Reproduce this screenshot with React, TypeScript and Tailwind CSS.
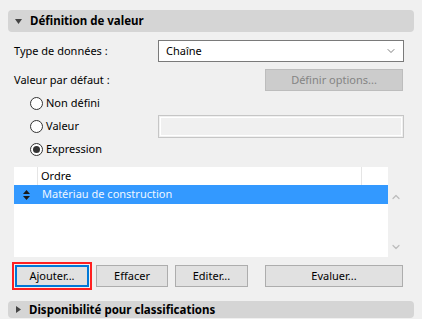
import { ChevronDown, ChevronUp } from "lucide-react";

const font = { fontFamily: '"Noto Sans", "Segoe UI", sans-serif' };

function Radio({ label, checked }: { label: string; checked?: boolean }) {
  return (
    <div className="flex items-center gap-[3px]">
      <span className="w-[13px] h-[13px] rounded-full border border-[#333] bg-white flex items-center justify-center">
        {checked && <span className="w-[7px] h-[7px] rounded-full bg-[#333]" />}
      </span>
      <span>{label}</span>
    </div>
  );
}

function Btn({ label, w, focused }: { label: string; w: string; focused?: boolean }) {
  return (
    <button
      className={
        "h-[22px] bg-[#e1e1e1] text-[11px] text-black flex items-center justify-center " +
        w +
        (focused
          ? " border-2 border-[#0078d7] outline-2 outline-[#ff2020] outline-offset-1"
          : " border border-[#adadad]")
      }
    >
      {label}
    </button>
  );
}

export default function App() {
  return (
    <div
      className="w-[422px] h-[319px] bg-[#f0f0f0] pt-[10px] px-[8px] text-[11px] text-black overflow-hidden"
      style={font}
    >
      <div className="h-[22px] rounded-[4px] bg-[#d5d5d5] flex items-center pl-[7px] gap-[8px] font-bold text-[11.5px]">
        <svg width="7" height="5" viewBox="0 0 7 5">
          <path d="M0 0H7L3.5 5Z" fill="#444" />
        </svg>
        <span>Définition de valeur</span>
      </div>

      <div className="pl-[6px] pr-[10px]">
        <div className="mt-[8px] h-[22px] flex items-center justify-between">
          <span>Type de données :</span>
          <div className="w-[246px] h-[22px] bg-white border border-[#7a7a7a] flex items-center justify-between pl-[7px] pr-[6px]">
            <span>Chaîne</span>
            <ChevronDown size={12} strokeWidth={1.5} color="#555" />
          </div>
        </div>

        <div className="mt-[7px] h-[22px] flex items-center justify-between">
          <span>Valeur par défaut :</span>
          <div className="w-[138px] h-[22px] mr-px bg-[#cccccc] border border-[#bdbdbd] text-[#848484] flex items-center justify-center">
            Définir options...
          </div>
        </div>

        <div className="pl-[16px] mt-[1px]">
          <div className="h-[23px] flex items-center">
            <Radio label="Non défini" />
          </div>
          <div className="h-[23px] flex items-center justify-between">
            <Radio label="Valeur" />
            <div className="w-[246px] h-[23px] border border-[#c6c6c6] bg-[#f0f0f0] p-px">
              <div className="w-full h-full border border-white" />
            </div>
          </div>
          <div className="h-[23px] flex items-center">
            <Radio label="Expression" checked />
          </div>
        </div>

        <div className="mt-[6px] flex">
          <div className="w-[374px] h-[90px] bg-white">
            <div className="h-[18px] flex">
              <div className="w-[24px] border-r border-[#e5e5e5]" />
              <div className="w-[324px] border-r border-[#e5e5e5] pl-[3px] flex items-center">
                Ordre
              </div>
            </div>
            <div className="h-[19px] bg-[#3399ff] text-[#eef6ff] flex items-center">
              <div className="w-[24px] flex justify-center">
                <svg width="7" height="10" viewBox="0 0 7 10">
                  <path d="M3.5 0L7 4H0Z M0 6H7L3.5 10Z" fill="#1a1a1a" />
                </svg>
              </div>
              <span className="pl-[4px]">Matériau de construction</span>
            </div>
          </div>
          <div className="w-[16px] flex flex-col items-center justify-between pt-[24px] pb-[4px]">
            <ChevronUp size={12} strokeWidth={2.5} color="#bdbdbd" />
            <ChevronDown size={12} strokeWidth={2.5} color="#bdbdbd" />
          </div>
        </div>

        <div className="mt-[8px] flex items-center">
          <div className="ml-[1px]">
            <Btn label="Ajouter..." w="w-[74px]" focused />
          </div>
          <div className="ml-[7px]">
            <Btn label="Effacer" w="w-[72px]" />
          </div>
          <div className="ml-[7px]">
            <Btn label="Editer..." w="w-[73px]" />
          </div>
          <div className="ml-[17px]">
            <Btn label="Evaluer..." w="w-[138px]" />
          </div>
        </div>
      </div>

      <div className="mt-[14px] h-[17px] rounded-[4px] bg-[#d5d5d5] flex items-center pl-[8px] gap-[8px] font-bold text-[11.5px]">
        <svg width="5" height="7" viewBox="0 0 5 7">
          <path d="M0 0V7L5 3.5Z" fill="#444" />
        </svg>
        <span>Disponibilité pour classifications</span>
      </div>
    </div>
  );
}
